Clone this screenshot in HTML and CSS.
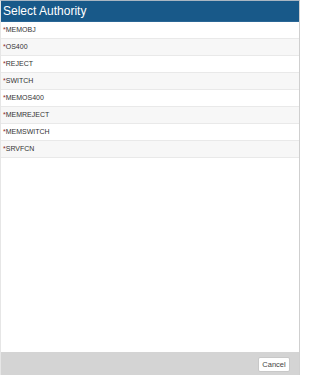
FILE: index.html
```html
<!DOCTYPE html>
<html>
<head>
<meta charset="utf-8">
<link rel="stylesheet" href="styles.css">
</head>
<body>
<div class="dialog">
  <div class="header">Select Authority</div>
  <div class="list">
    <div class="row"><span class="ast">*</span>MEMOBJ</div>
    <div class="row"><span class="ast">*</span>OS400</div>
    <div class="row"><span class="ast">*</span>REJECT</div>
    <div class="row"><span class="ast">*</span>SWITCH</div>
    <div class="row"><span class="ast">*</span>MEMOS400</div>
    <div class="row"><span class="ast">*</span>MEMREJECT</div>
    <div class="row"><span class="ast">*</span>MEMSWITCH</div>
    <div class="row"><span class="ast">*</span>SRVFCN</div>
  </div>
  <div class="footer">
    <button class="btn">Cancel</button>
  </div>
</div>
</body>
</html>
```
FILE: styles.css
```css
html, body {
  margin: 0;
  padding: 0;
  background: #ffffff;
}
body {
  width: 300px;
  height: 375px;
  overflow: hidden;
  font-family: "Liberation Sans", Arial, sans-serif;
}
.dialog {
  box-sizing: border-box;
  width: 300px;
  height: 375px;
  display: flex;
  flex-direction: column;
  border-top: 1px solid #a9b6c2;
  border-right: 1px solid #cfcfcf;
  border-left: 1px solid #e6e6e6;
}
.header {
  height: 20px;
  background: #185989;
  color: #ffffff;
  font-size: 12px;
  line-height: 20px;
  padding-left: 2px;
  flex: none;
}
.list {
  flex: 1;
  border-top: 1px solid #2a6796;
}
.row {
  box-sizing: border-box;
  height: 17px;
  line-height: 16px;
  font-size: 7px;
  color: #333333;
  padding-left: 2px;
  border-bottom: 1px solid #e9e9e9;
  background: #ffffff;
}
.row:nth-child(even) {
  background: #f7f7f7;
}
.ast {
  color: #8b2a2a;
}
.footer {
  height: 23px;
  flex: none;
  background: #d4d4d4;
  display: flex;
  justify-content: flex-end;
  align-items: center;
  padding-right: 9px;
}
.btn {
  font-family: "Liberation Sans", Arial, sans-serif;
  font-size: 7.5px;
  color: #444444;
  background: #ffffff;
  border: 1px solid #c8c8c8;
  border-radius: 2px;
  height: 15px;
  width: 32px;
  padding: 0;
  margin-top: 1px;
}
```
